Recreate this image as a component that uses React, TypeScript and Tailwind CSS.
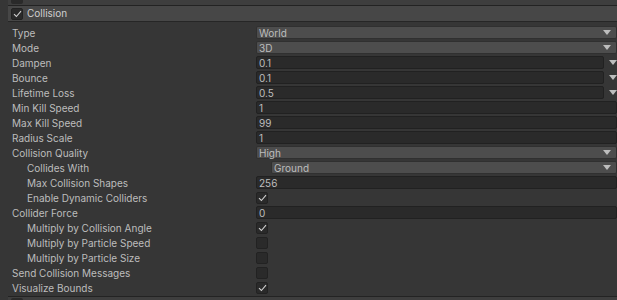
import React from "react"

type Row =
  | { label: string; indent?: boolean; kind: "dropdown"; value: string }
  | { label: string; indent?: boolean; kind: "curve"; value: string }
  | { label: string; indent?: boolean; kind: "field"; value: string }
  | { label: string; indent?: boolean; kind: "check"; checked: boolean }

const rows: Row[] = [
  { label: "Type", kind: "dropdown", value: "World" },
  { label: "Mode", kind: "dropdown", value: "3D" },
  { label: "Dampen", kind: "curve", value: "0.1" },
  { label: "Bounce", kind: "curve", value: "0.1" },
  { label: "Lifetime Loss", kind: "curve", value: "0.5" },
  { label: "Min Kill Speed", kind: "field", value: "1" },
  { label: "Max Kill Speed", kind: "field", value: "99" },
  { label: "Radius Scale", kind: "field", value: "1" },
  { label: "Collision Quality", kind: "dropdown", value: "High" },
  { label: "Collides With", indent: true, kind: "dropdown", value: "Ground" },
  { label: "Max Collision Shapes", indent: true, kind: "field", value: "256" },
  { label: "Enable Dynamic Colliders", indent: true, kind: "check", checked: true },
  { label: "Collider Force", kind: "field", value: "0" },
  { label: "Multiply by Collision Angle", indent: true, kind: "check", checked: true },
  { label: "Multiply by Particle Speed", indent: true, kind: "check", checked: false },
  { label: "Multiply by Particle Size", indent: true, kind: "check", checked: false },
  { label: "Send Collision Messages", kind: "check", checked: false },
  { label: "Visualize Bounds", kind: "check", checked: true },
]

function Arrow() {
  return (
    <svg width="8" height="5" viewBox="0 0 8 5" className="shrink-0">
      <path d="M0 0 H8 L4 5 Z" fill="#bdbdbd" />
    </svg>
  )
}

function Check({ checked }: { checked: boolean }) {
  return (
    <div className="w-[12px] h-[12px] rounded-[2px] bg-[#2a2a2a] border border-[#222] flex items-center justify-center">
      {checked && (
        <svg width="9" height="8" viewBox="0 0 9 8">
          <path d="M1 4.2 L3.4 6.5 L8 1.2" stroke="#d0d0d0" strokeWidth="1.1" fill="none" />
        </svg>
      )}
    </div>
  )
}

function Value({ row }: { row: Row }) {
  if (row.kind === "dropdown") {
    return (
      <div className={`flex-1 h-[13px] bg-[#4d4d4d] border border-[#303030] rounded-[2px] flex items-center pl-[2px] pr-[5px] ${row.indent ? "ml-[15px]" : ""}`}>
        <span className="flex-1 leading-none">{row.value}</span>
        <Arrow />
      </div>
    )
  }
  if (row.kind === "curve") {
    return (
      <div className="flex-1 flex items-center gap-[4px]">
        <div className="flex-1 h-[13px] bg-[#2a2a2a] border border-[#212121] rounded-[2px] flex items-center pl-[2px]">
          <span className="leading-none">{row.value}</span>
        </div>
        <div className="w-[9px] flex justify-center">
          <Arrow />
        </div>
      </div>
    )
  }
  if (row.kind === "field") {
    return (
      <div className="flex-1 h-[13px] bg-[#2a2a2a] border border-[#212121] rounded-[2px] flex items-center pl-[2px]">
        <span className="leading-none">{row.value}</span>
      </div>
    )
  }
  return <Check checked={row.checked} />
}

export default function App() {
  return (
    <div
      className="w-[617px] h-[300px] overflow-hidden bg-[#363636] text-[10px] text-[#bdbdbd] flex flex-col"
      style={{ fontFamily: "Inter, 'Noto Sans', sans-serif" }}
    >
      {/* previous module header, cut off */}
      <div className="h-[6px] bg-[#3e3e3e] ml-[8px] relative overflow-hidden border-b border-[#232323] shrink-0">
        <div className="absolute left-[3px] bottom-[1px] w-[12px] h-[12px] bg-[#2a2a2a] rounded-[2px]" />
      </div>

      {/* Collision header */}
      <div className="h-[16px] ml-[8px] bg-[#474747] border-b border-[#262626] flex items-center gap-[4px] pl-[3px] shrink-0">
        <Check checked />
        <span className="text-[#cfcfcf]">Collision</span>
      </div>

      <div className="flex flex-col pt-[3px] pl-[12px]">
        {rows.map((row) => (
          <div key={row.label} className="h-[15px] flex items-center">
            <div className={`w-[244px] shrink-0 leading-none ${row.indent ? "pl-[15px]" : ""}`}>{row.label}</div>
            <div className="flex-1 flex items-center">
              <Value row={row} />
            </div>
          </div>
        ))}
      </div>

      {/* next module header, cut off */}
      <div className="mt-[1px] ml-[8px] h-[8px] bg-[#3e3e3e] border-t border-[#232323] relative">
        <div className="absolute left-[3px] top-[1px] w-[12px] h-[12px] bg-[#2a2a2a] rounded-[2px]" />
      </div>
    </div>
  )
}
